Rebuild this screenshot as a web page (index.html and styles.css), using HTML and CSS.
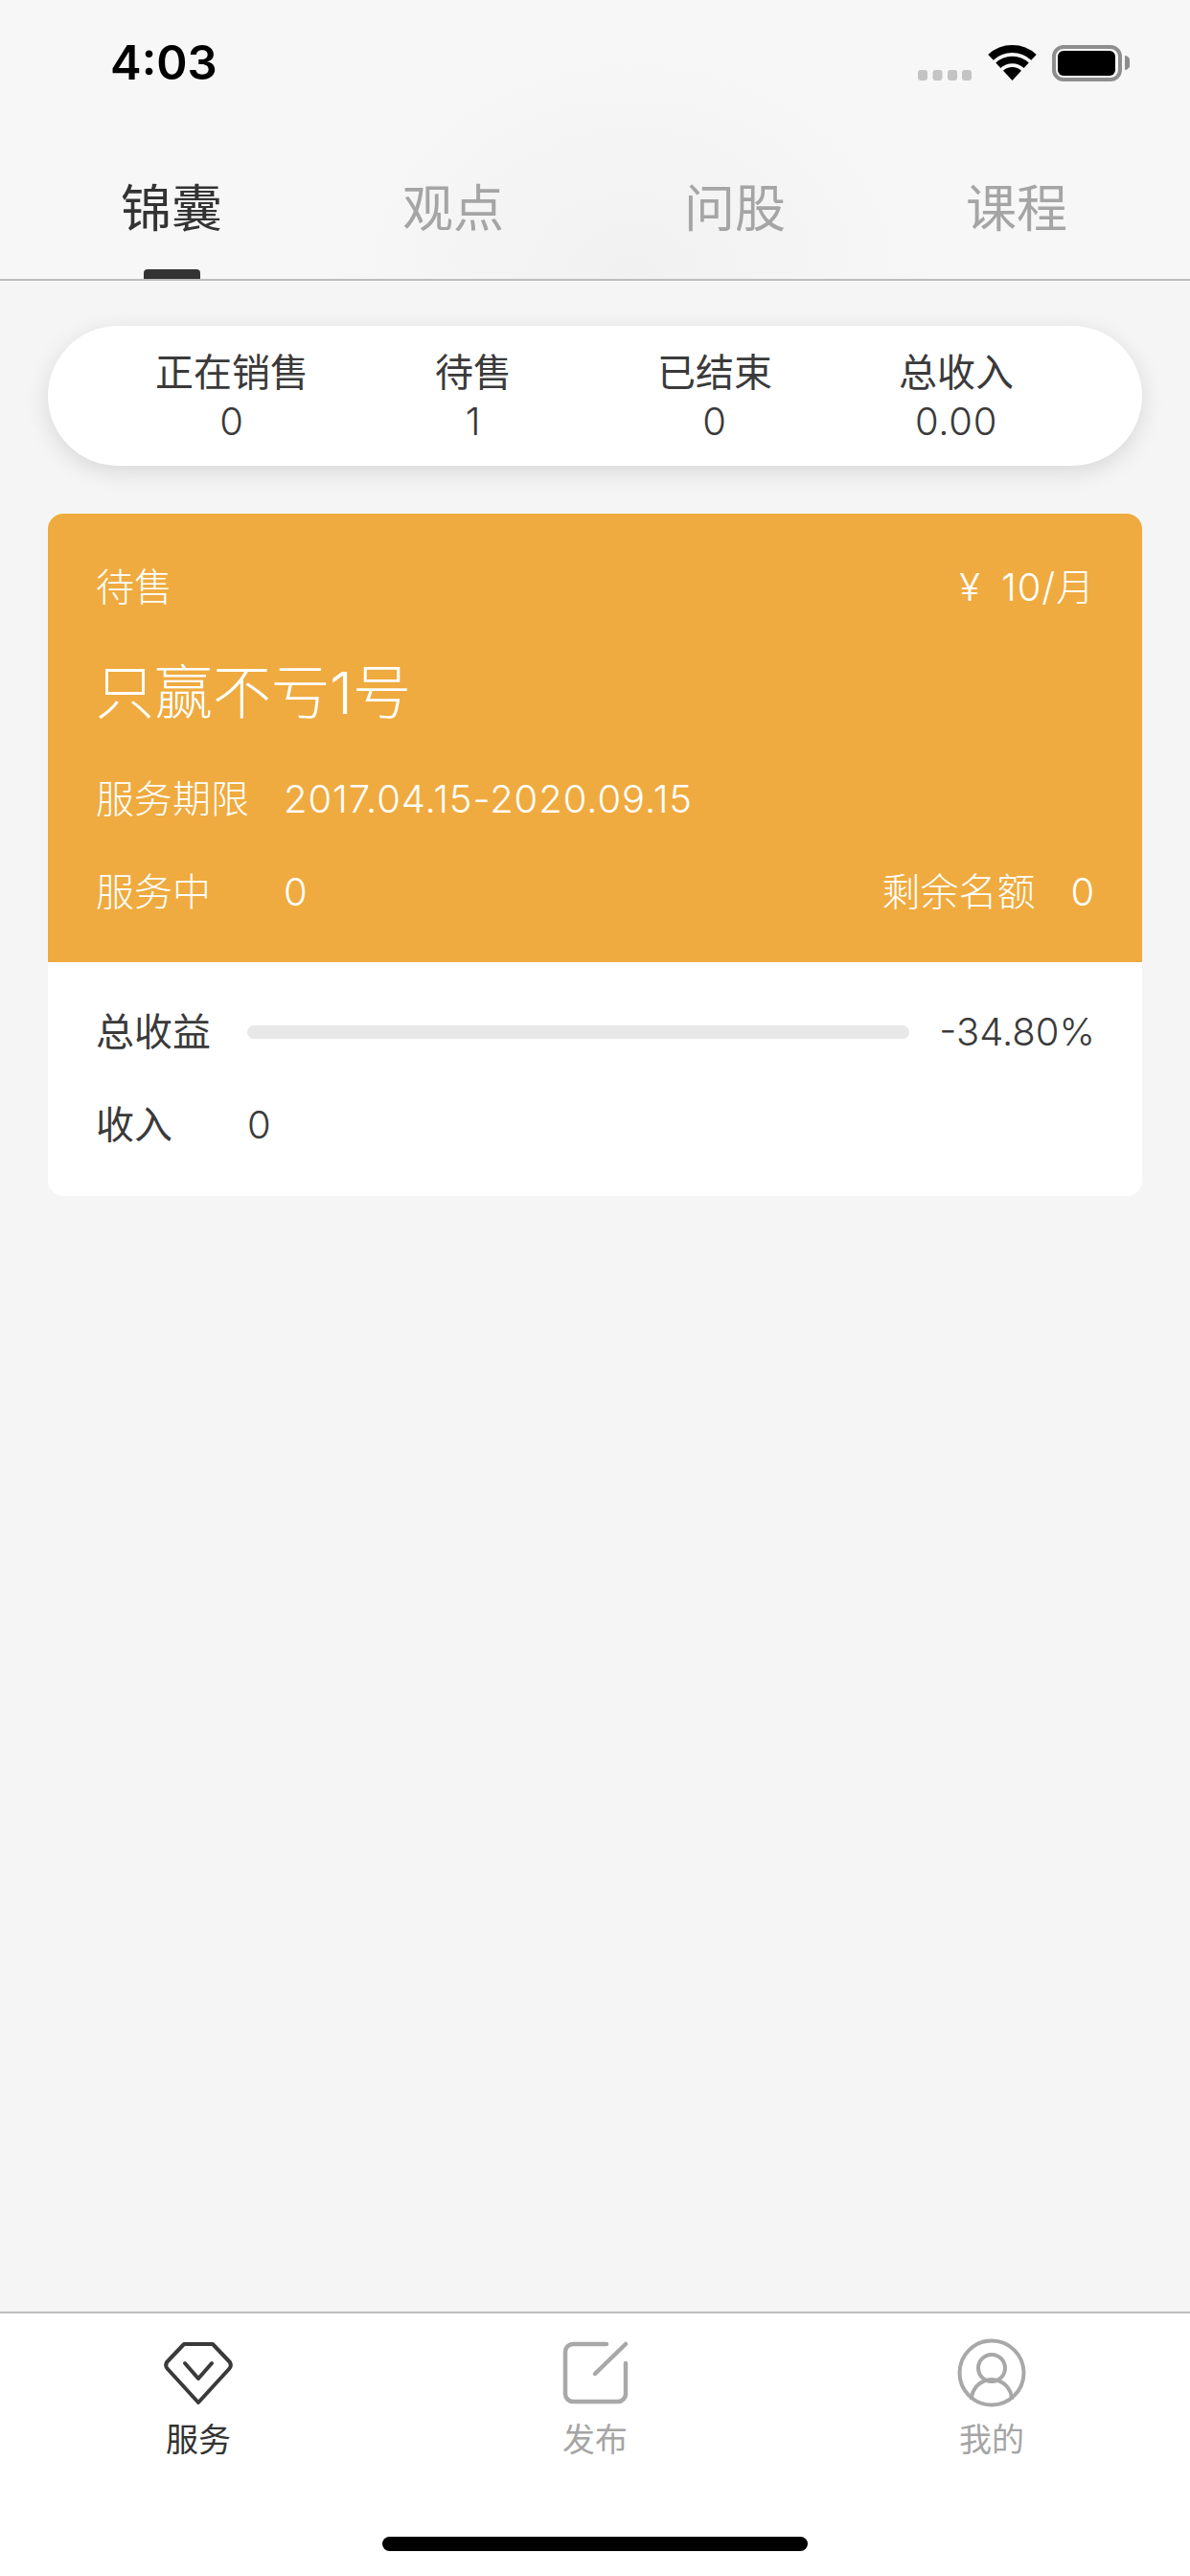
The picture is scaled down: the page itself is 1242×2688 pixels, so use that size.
FILE: index.html
```html
<!DOCTYPE html>
<html lang="zh-CN">
<head>
  <meta charset="UTF-8">
  <title>服务</title>
  <link rel="stylesheet" href="styles.css">
</head>
<body>
  <header class="top">
    <div class="status">
      <span class="time">4:03</span>
      <svg class="status-icons" width="221" height="38" viewBox="0 0 221 38">
        <g fill="#c4c4c4">
          <rect x="0" y="26" width="10" height="11" rx="3"/>
          <rect x="15.5" y="26" width="10" height="11" rx="3"/>
          <rect x="31" y="26" width="10" height="11" rx="3"/>
          <rect x="46" y="26" width="10" height="11" rx="3"/>
        </g>
        <path d="M98.5 37L89 26.8A14 14 0 0 1 108 26.8Z" fill="#000"/>
        <path d="M83.8 21.3A21.5 21.5 0 0 1 113.2 21.3" fill="none" stroke="#000" stroke-width="7.5"/>
        <path d="M76 12.9A33 33 0 0 1 121 12.9" fill="none" stroke="#000" stroke-width="8"/>
        <rect x="142" y="2" width="69" height="34" rx="10" fill="none" stroke="#8e8e8e" stroke-width="4"/>
        <rect x="146" y="6" width="60" height="26" rx="6" fill="#000"/>
        <path d="M216 11a6 7.5 0 0 1 0 15z" fill="#8e8e8e"/>
      </svg>
    </div>
    <nav class="tabs">
      <div class="tab tab-on">锦囊</div>
      <div class="tab">观点</div>
      <div class="tab">问股</div>
      <div class="tab">课程</div>
    </nav>
  </header>

  <main class="content">
    <section class="stats">
      <div class="stat"><div>正在销售</div><div class="num">0</div></div>
      <div class="stat"><div>待售</div><div class="num">1</div></div>
      <div class="stat"><div>已结束</div><div class="num">0</div></div>
      <div class="stat"><div>总收入</div><div class="num">0.00</div></div>
    </section>

    <section class="card">
      <div class="card-head">
        <div class="row row-between">
          <span>待售</span>
          <span class="num price">¥ 10/月</span>
        </div>
        <div class="card-title">只赢不亏1号</div>
        <div class="row row-period">
          <span class="info-label">服务期限</span>
          <span class="num">2017.04.15-2020.09.15</span>
        </div>
        <div class="row row-between row-quota">
          <div class="row">
            <span class="info-label">服务中</span>
            <span class="num">0</span>
          </div>
          <div class="row">
            <span class="quota-label">剩余名额</span>
            <span class="num">0</span>
          </div>
        </div>
      </div>
      <div class="card-body">
        <div class="row">
          <span class="profit-label">总收益</span>
          <div class="bar"></div>
          <span class="num pct">-34.80%</span>
        </div>
        <div class="row row-income">
          <span class="income-label">收入</span>
          <span class="num">0</span>
        </div>
      </div>
    </section>
  </main>

  <footer class="tabbar">
    <div class="bar-items">
      <div class="bar-item bar-item-on">
        <svg width="84" height="72" viewBox="0 0 84 72" fill="none" stroke="#3a3a3a" stroke-width="4" stroke-linecap="round" stroke-linejoin="round">
          <path d="M27 6H57L75 25Q77 29 74 32L42 67L10 32Q7 29 9 25Z"/>
          <path d="M28 26L42 42L56 26"/>
        </svg>
        <span>服务</span>
      </div>
      <div class="bar-item">
        <svg width="72" height="72" viewBox="0 0 72 72" fill="none" stroke="#a8a8a8" stroke-width="4.5" stroke-linecap="round">
          <path d="M48 6H13a8 8 0 0 0-8 8V58a8 8 0 0 0 8 8H60a8 8 0 0 0 8-8V26"/>
          <path d="M36 37L68 6"/>
        </svg>
        <span>发布</span>
      </div>
      <div class="bar-item">
        <svg width="72" height="72" viewBox="0 0 72 72" fill="none" stroke="#a8a8a8" stroke-width="4">
          <circle cx="36" cy="36" r="33.5"/>
          <circle cx="36" cy="31" r="14"/>
          <path d="M15 64A21 21 0 0 1 57 64"/>
        </svg>
        <span>我的</span>
      </div>
    </div>
    <div class="home-bar"></div>
  </footer>
</body>
</html>
```

FILE: styles.css
```css
* {
  box-sizing: border-box;
}

html,
body {
  height: 100%;
}

body {
  margin: 0;
  display: flex;
  flex-direction: column;
  height: 2688px;
  overflow: hidden;
  background: #f5f5f5;
  color: #3a3a3a;
  font-family: Inter, "Noto Sans CJK SC", sans-serif;
  font-size: 40px;
  font-weight: 400;
}

.num {
  font-weight: 350;
  letter-spacing: 0.7px;
}

/* top area */
.top {
  height: 293px;
  border-bottom: 2px solid #bdbdbd;
  background: radial-gradient(ellipse 320px 260px at 660px 290px, #f1f1f1, #f7f7f7);
}

.status {
  display: flex;
  justify-content: space-between;
  align-items: flex-start;
  height: 178px;
  padding: 36px 63px 0 115px;
}

.time {
  color: #000;
  font-size: 49px;
  font-weight: 600;
  line-height: 60px;
}

.status-icons {
  margin-top: 11px;
}

.tabs {
  display: grid;
  grid-template-columns: repeat(4, 294px);
  padding: 0 32px;
}

.tab {
  display: flex;
  flex-direction: column;
  align-items: center;
  color: #a5a5a5;
  font-size: 53px;
  line-height: 80px;
}

.tab::after {
  content: "";
  width: 59px;
  height: 10px;
  margin-top: 23px;
  border-radius: 4px 4px 0 0;
}

.tab-on {
  color: #333;
}

.tab-on::after {
  background: #333;
}

/* summary + card */
.content {
  flex: 1;
  padding: 47px 50px 0;
}

.stats {
  display: grid;
  grid-template-columns: repeat(4, 252px);
  height: 146px;
  padding: 23px 0 0 66px;
  border-radius: 73px;
  background: #fff;
  box-shadow: 0 6px 24px rgba(0, 0, 0, 0.12);
}

.stat {
  text-align: center;
  line-height: 51px;
}

.card {
  margin-top: 50px;
  border-radius: 16px;
  background: #fff;
  overflow: hidden;
}

.card-head {
  height: 468px;
  padding: 52px 49px 0 50px;
  background: #efab3f;
  color: #fff;
  font-weight: 300;
}

.card-head .num {
  font-weight: 300;
  letter-spacing: 0.9px;
}

.row {
  display: flex;
  align-items: center;
  line-height: 50px;
}

.row-between {
  justify-content: space-between;
}

.card-head .price {
  word-spacing: 9px;
}

.card-title {
  margin-top: 50px;
  font-size: 61px;
  line-height: 70px;
}

.row-period {
  margin-top: 51px;
}

.row-quota {
  margin-top: 47px;
}

.info-label {
  width: 196px;
}

.quota-label {
  width: 197px;
}

.card-body {
  height: 244px;
  padding: 48px 49px 0 50px;
}

.profit-label {
  width: 158px;
}

.bar {
  flex: 1;
  height: 14px;
  border-radius: 7px;
  background: #e8e8e8;
}

.pct {
  width: 194px;
  letter-spacing: 0;
  text-align: right;
}

.row-income {
  margin-top: 47px;
}

.income-label {
  width: 158px;
}

/* bottom tab bar */
.tabbar {
  height: 276px;
  border-top: 2px solid #bdbdbd;
  background: #fff;
}

.bar-items {
  display: grid;
  grid-template-columns: repeat(3, 414px);
  padding-top: 26px;
}

.bar-item {
  display: flex;
  flex-direction: column;
  align-items: center;
  color: #a5a5a5;
  font-size: 34px;
  line-height: 40px;
}

.bar-item span {
  margin-top: 14px;
}

.bar-item-on {
  color: #333;
}

.home-bar {
  width: 444px;
  height: 15px;
  margin: 81px auto 0;
  border-radius: 8px;
  background: #000;
}
```
